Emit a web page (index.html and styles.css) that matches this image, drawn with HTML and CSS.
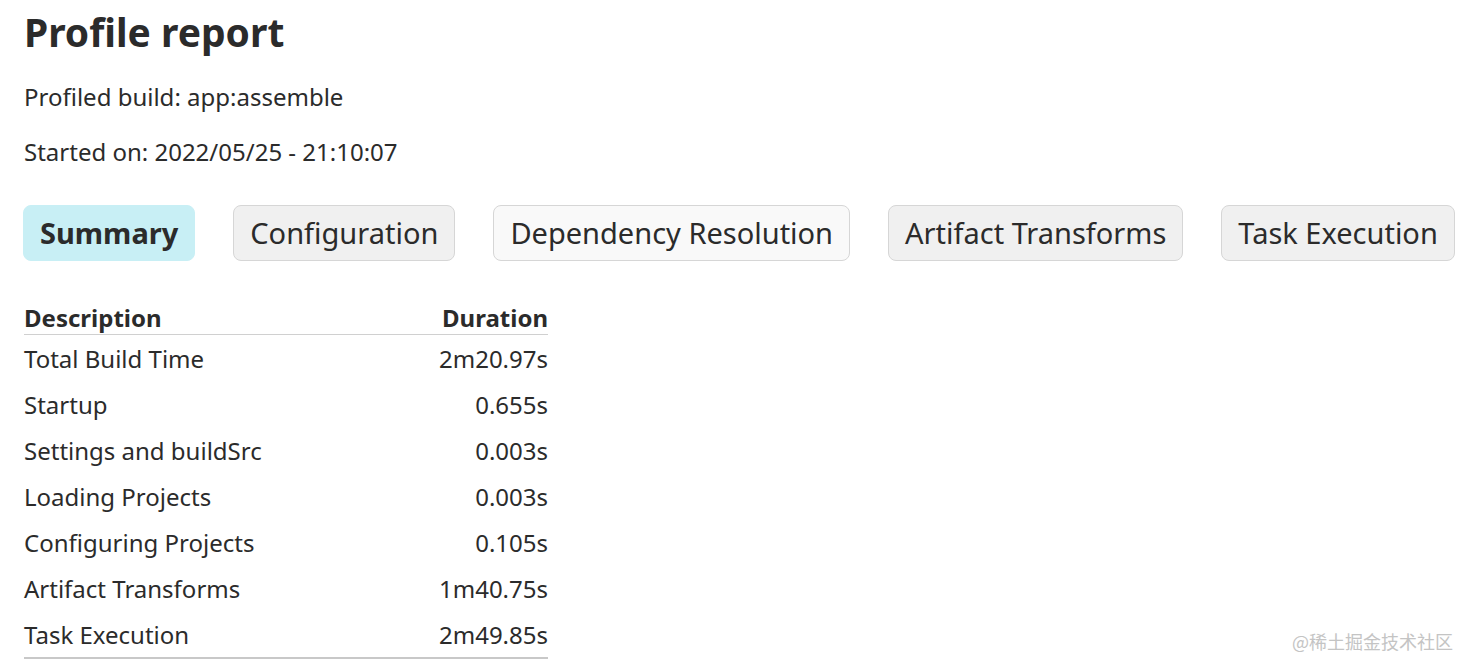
FILE: index.html
```html
<!DOCTYPE html>
<html lang="en">
<head>
<meta charset="utf-8">
<title>Profile report</title>
<link rel="stylesheet" href="styles.css">
</head>
<body>
<main class="page">
  <h1 class="title">Profile report</h1>
  <p class="meta">Profiled build: app:assemble</p>
  <p class="meta">Started on: 2022/05/25 - 21:10:07</p>
  <nav class="tabs">
    <button class="tab tab-active">Summary</button>
    <button class="tab">Configuration</button>
    <button class="tab tab-light">Dependency Resolution</button>
    <button class="tab">Artifact Transforms</button>
    <button class="tab">Task Execution</button>
  </nav>
  <table class="summary">
    <thead>
      <tr><th class="col-desc">Description</th><th class="col-num">Duration</th></tr>
    </thead>
    <tbody>
      <tr><td>Total Build Time</td><td class="col-num">2m20.97s</td></tr>
      <tr><td>Startup</td><td class="col-num">0.655s</td></tr>
      <tr><td>Settings and buildSrc</td><td class="col-num">0.003s</td></tr>
      <tr><td>Loading Projects</td><td class="col-num">0.003s</td></tr>
      <tr><td>Configuring Projects</td><td class="col-num">0.105s</td></tr>
      <tr><td>Artifact Transforms</td><td class="col-num">1m40.75s</td></tr>
      <tr><td>Task Execution</td><td class="col-num">2m49.85s</td></tr>
    </tbody>
  </table>
</main>
<div class="watermark">@稀土掘金技术社区</div>
</body>
</html>
```
FILE: styles.css
```css
html, body {
  margin: 0;
  padding: 0;
  background: #ffffff;
}
body {
  font-family: "Noto Sans", "Open Sans", "Noto Sans CJK SC", sans-serif;
  color: #2b2b2b;
}
.page {
  padding: 0 24px;
}
.title {
  margin: 0;
  font-size: 39px;
  line-height: 64px;
  font-weight: 700;
}
.meta {
  margin: 0;
  font-size: 24px;
  line-height: 55px;
}
.meta:first-of-type {
  margin-top: 5px;
}
.tabs {
  display: flex;
  gap: 38px;
  margin: 26px 0 0 -1px;
}
.tab {
  flex: 0 0 auto;
  white-space: nowrap;
  font-family: inherit;
  color: #2b2b2b;
  height: 56px;
  padding: 0 16px 2px;
  font-size: 29px;
  border: 1px solid #d6d6d6;
  border-radius: 8px;
  background: #f0f0f0;
  cursor: pointer;
}
.tab-light {
  background: #f9f9f9;
}
.tab-active {
  background: #c8eff5;
  border-color: #c8eff5;
  font-weight: 700;
}
.summary {
  margin-top: 39px;
  width: 524px;
  border-collapse: collapse;
  font-size: 24px;
}
.summary th {
  height: 34px;
  padding: 0;
  font-weight: 700;
  text-align: left;
  border-bottom: 1px solid #d0d0d0;
  vertical-align: middle;
}
.summary td {
  height: 46px;
  padding: 0;
  vertical-align: middle;
}
.summary tbody tr:last-child td {
  border-bottom: 2px solid #c8c8c8;
}
.summary .col-num {
  text-align: right;
}
.watermark {
  position: absolute;
  right: 20px;
  bottom: 18px;
  font-family: "Noto Sans CJK SC", sans-serif;
  font-size: 18px;
  color: #c4c4c4;
}
```
